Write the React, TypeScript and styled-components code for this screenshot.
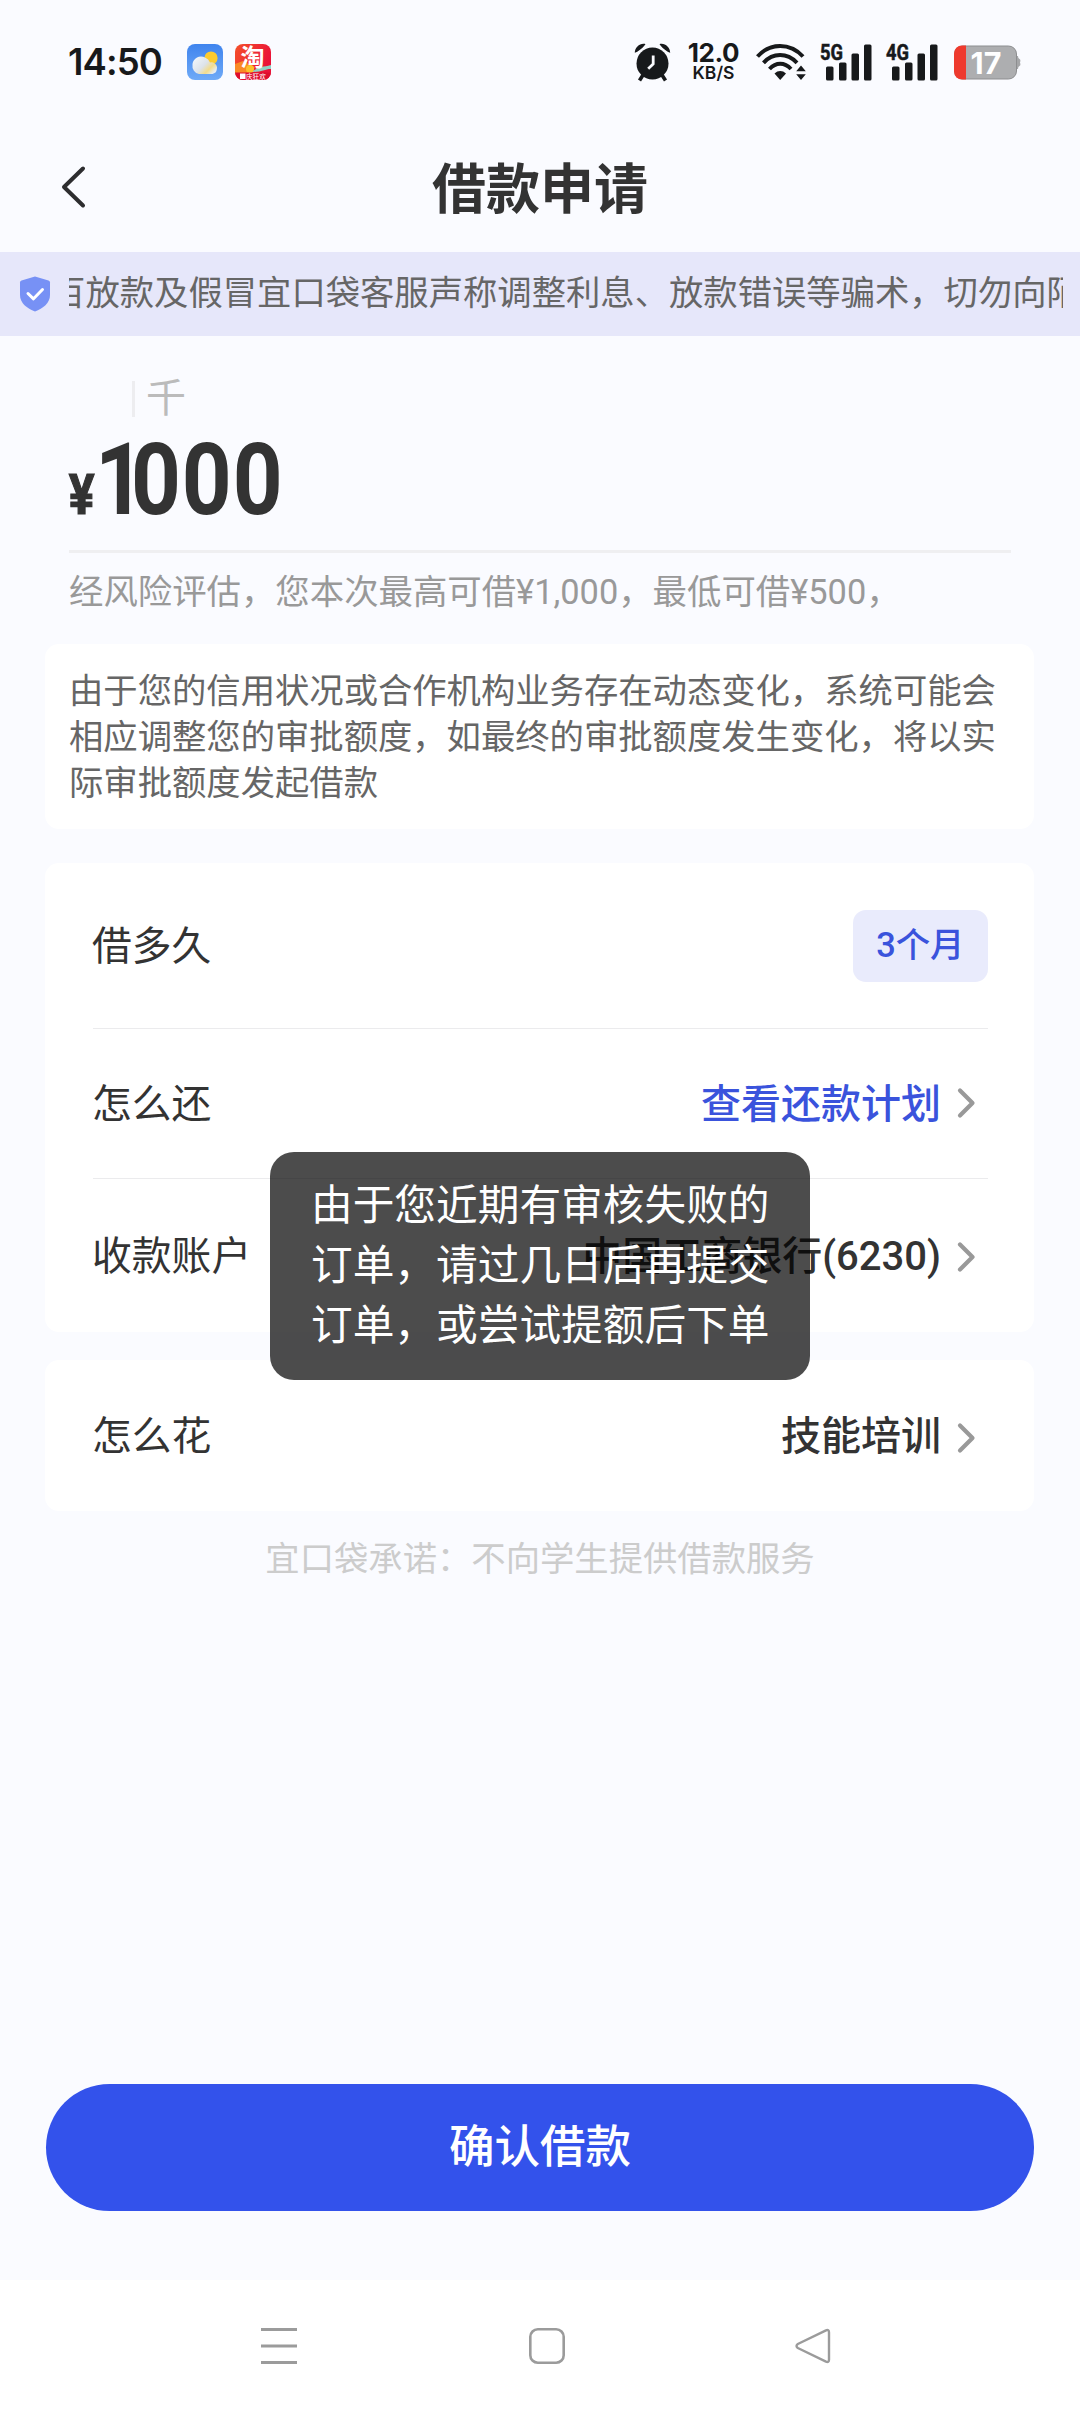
import React from 'react';
import styled, { createGlobalStyle } from 'styled-components';

const GlobalStyle = createGlobalStyle`
  *, *::before, *::after { box-sizing: border-box; }
  body { margin: 0; background: #fafbff; }
`;

const Screen = styled.div`
  position: relative;
  display: flex;
  flex-direction: column;
  width: 1080px;
  height: 2412px;
  overflow: hidden;
  background: #fafbff;
  color: #333;
  font-family: Roboto, 'Noto Sans CJK SC', sans-serif;
  svg { display: block; flex: none; overflow: visible; }
`;

const StatusBar = styled.header`
  display: flex;
  align-items: center;
  height: 124px;
  padding: 0 59px 0 68px;
  color: #17191b;
  font-family: Inter, sans-serif;
`;

const Clock = styled.span`
  width: 119px;
  font-size: 36.5px;
  font-weight: 600;
  line-height: 44px;
  letter-spacing: -0.9px;
  white-space: nowrap;
`;

const AppIcons = styled.div`
  display: flex;
  gap: 12px;
`;

const StatusIcons = styled.div`
  display: flex;
  align-items: center;
  margin-left: auto;
`;

const NetSpeed = styled.div`
  display: flex;
  flex-direction: column;
  align-items: center;
  width: 53px;
  margin: 0 16px 0 15px;
`;

const SpeedValue = styled.span`
  font-size: 26px;
  font-weight: 700;
  line-height: 20px;
  letter-spacing: -0.4px;
`;

const SpeedUnit = styled.span`
  margin-top: 1px;
  font-size: 17.5px;
  font-weight: 600;
  line-height: 17px;
`;

const Signals = styled.div`
  display: flex;
  gap: 14px;
  margin: 0 16px 0 14px;
`;

const TitleBar = styled.div`
  display: grid;
  grid-template-columns: 120px 1fr 120px;
  align-items: center;
  height: 128px;
`;

const BackButton = styled.button`
  display: flex;
  padding: 0 0 2px 60px;
  border: 0;
  background: none;
`;

const Title = styled.h1`
  margin: 0;
  padding-top: 5px;
  font-size: 54px;
  font-weight: 700;
  line-height: 64px;
  text-align: center;
`;

const Notice = styled.div`
  display: flex;
  align-items: center;
  height: 84px;
  padding: 0 17px 0 20px;
  background: #e6e7fa;
`;

const NoticeWindow = styled.div`
  display: flex;
  flex: 1;
  justify-content: center;
  margin-left: 19px;
  height: 46px;
  overflow: hidden;
`;

const NoticeText = styled.span`
  flex: none;
  color: #666;
  font-size: 34.35px;
  line-height: 44px;
  white-space: nowrap;
`;

const AmountSection = styled.section`
  height: 308px;
  padding: 45px 69px 0 68px;
`;

const UnitRow = styled.div`
  display: flex;
  align-items: center;
  height: 36px;
  padding-left: 64px;
  color: #bbb;
  font-size: 40px;
  line-height: 36px;
`;

const UnitTick = styled.i`
  width: 3px;
  height: 36px;
  margin-right: 11px;
  background: #ededf0;
`;

const AmountRow = styled.div`
  display: flex;
  align-items: baseline;
  height: 133px;
  font-weight: 700;
  line-height: 126px;
`;

const Currency = styled.span`
  width: 27px;
  padding-left: 1px;
  font-size: 56px;
  transform: scaleX(0.86);
  transform-origin: left;
  -webkit-text-stroke: 1.2px currentColor;
`;

const Amount = styled.span`
  font-size: 100px;
  letter-spacing: 1.1px;
  transform: scaleX(0.87);
  transform-origin: left;
`;

const LeadDigit = styled.span`
  letter-spacing: -16px;
`;

const AmountRule = styled.div`
  height: 3px;
  margin-left: 1px;
  background: #efeff1;
`;

const Hint = styled.p`
  margin: 16px 0 0 1px;
  color: #999;
  font-size: 34.4px;
  line-height: 46px;
  white-space: nowrap;
`;

const Card = styled.section<{ $top?: number }>`
  margin: ${(p) => p.$top ?? 0}px 46px 0 45px;
  border-radius: 14px;
  background: #fff;
`;

const Explanation = styled(Card)`
  height: 185px;
  padding: 24px;
  color: #666;
  font-size: 34.35px;
  line-height: 46px;
`;

const Row = styled.div<{ $height: number; $last?: boolean }>`
  display: flex;
  align-items: center;
  height: ${(p) => p.$height}px;
  margin: 0 46px 0 48px;
  border-bottom: ${(p) => (p.$last ? 0 : 1)}px solid #ebebed;
  font-size: 40px;
  line-height: 50px;
`;

const Label = styled.span`
  margin-right: auto;
  margin-left: -1px;
  padding-top: 2px;
  font-size: 39.8px;
`;

const Value = styled.span<{ $link?: boolean }>`
  margin-right: 16px;
  padding-top: 2px;
  color: ${(p) => (p.$link ? '#3a53dc' : '#333')};
  font-weight: 500;
  white-space: nowrap;
`;

const Term = styled.span`
  height: 72px;
  padding: 0 23.5px;
  border-radius: 13px;
  background: #e9ebfc;
  color: #3a53dc;
  font-size: 34.4px;
  font-weight: 500;
  line-height: 70px;
`;

const Pledge = styled.p`
  margin: 25px 0 0;
  color: #ccc;
  font-size: 34.35px;
  line-height: 46px;
  text-align: center;
`;

const Confirm = styled.button`
  height: 127px;
  margin: auto 46px 69px;
  padding: 0;
  border: 0;
  border-radius: 64px;
  background: #3352eb;
  color: #fff;
  font-family: inherit;
  font-size: 45.5px;
  font-weight: 500;
  line-height: 60px;
`;

const NavBar = styled.nav`
  display: flex;
  align-items: flex-start;
  gap: 232px;
  height: 132px;
  padding: 48px 0 0 261px;
  background: #fff;
`;

const Toast = styled.div`
  position: absolute;
  top: 1152px;
  left: 270px;
  width: 540px;
  height: 228px;
  padding: 24px 0 0 41px;
  border-radius: 24px;
  background: rgba(0, 0, 0, 0.7);
  color: #fff;
  font-size: 41.7px;
  line-height: 60px;
  white-space: nowrap;
`;

const WeatherIcon = () => (
  <svg width="36" height="36" viewBox="0 0 36 36">
    <defs>
      <linearGradient id="sky" x1="0" y1="0" x2="0" y2="1">
        <stop offset="0" stopColor="#3f84ee" />
        <stop offset="1" stopColor="#6faaf7" />
      </linearGradient>
      <linearGradient id="cloud" x1="0" y1="0" x2="1" y2="0.7">
        <stop offset="0" stopColor="#f6fafd" />
        <stop offset="0.55" stopColor="#dde3ea" />
        <stop offset="0.8" stopColor="#f3dc8a" />
        <stop offset="1" stopColor="#e8ecf0" />
      </linearGradient>
    </defs>
    <rect width="36" height="36" rx="8" fill="url(#sky)" />
    <circle cx="24" cy="14" r="6.6" fill="#fccb2f" />
    <path d="M12 30a7 8.500 0 0 1-6.500-10A8.500 8.500 0 0 1 18 13.500a8 8 0 0 1 5 5 5.500 5.500 0 0 1 7 4.500c0 5-2 7-6 7Z" fill="url(#cloud)" />
  </svg>
);

const ShopIcon = () => (
  <svg width="36" height="36" viewBox="0 0 36 36">
    <defs>
      <linearGradient id="shop" x1="0" y1="0" x2="1" y2="0.4">
        <stop offset="0" stopColor="#f4502a" />
        <stop offset="1" stopColor="#ea1238" />
      </linearGradient>
      <clipPath id="shopClip"><rect width="36" height="36" rx="8" /></clipPath>
    </defs>
    <g clipPath="url(#shopClip)">
      <rect width="36" height="36" fill="url(#shop)" />
      <path d="M0 20 8 17l12 6-4 6H0Z" fill="#f98a25" />
      <circle cx="15" cy="25" r="4" fill="#fcc22c" />
      <path d="M18 27c5-4 10-4 18-6v4c-6 0-10 3-18 3Z" fill="#8fd3c4" />
      <path d="M0 28.500h36v8H0Z" fill="#de0d2e" />
      <text x="5.500" y="21.500" fontSize="24" fontWeight="700" fill="#fff" fontFamily="'Noto Sans CJK SC', sans-serif">淘</text>
      <rect x="5" y="29.500" width="5.500" height="5.500" fill="#fff" />
      <text x="11" y="34.800" fontSize="6.600" fill="#fff" fontFamily="'Noto Sans CJK SC', sans-serif">庆狂欢</text>
    </g>
  </svg>
);

const AlarmIcon = () => (
  <svg width="38" height="38" viewBox="0 0 38 38">
    <path d="M9 32 5.500 37.500M28 32l3.500 5.500" stroke="#17191b" strokeWidth="3.600" />
    <circle cx="18.500" cy="20.500" r="16" fill="#17191b" />
    <path d="M.8 9.800C.8 4 6.500-.6 11.500 1c-1 2.500-7.500 8-10.700 8.800ZM36.200 9.800C36.200 4 30.500-.6 25.500 1c1 2.500 7.500 8 10.700 8.800Z" fill="#17191b" />
    <path d="M19.200 12.500V21l-5 4.800" fill="none" stroke="#fafbff" strokeWidth="2.800" />
  </svg>
);

const WifiIcon = () => (
  <svg width="50" height="38" viewBox="0 0 50 38">
    <g fill="none" stroke="#17191b" strokeWidth="4">
      <path d="M1.500 13.500C14-.5 34-.5 47 13.500" />
      <path d="M7.500 19.800C17 9.500 31 9.500 41 19.800" />
      <path d="M13.500 26C20 19 28.500 19 35 26" />
    </g>
    <path d="M18.500 30.500c3.500-3.300 8-3.300 11.500 0L24.200 37Z" fill="#17191b" />
    <path d="m45 22.500 4.800 5.700h-9.600ZM45 37l4.800-5.700h-9.600Z" fill="#17191b" />
  </svg>
);

const SignalIcon = ({ label }: { label: string }) => (
  <svg width="52" height="37" viewBox="0 0 52 37">
    <text x="0" y="15.500" fontSize="21.500" fontWeight="700" textLength="23" lengthAdjust="spacingAndGlyphs" fill="#17191b" stroke="#17191b" strokeWidth="0.500" fontFamily="Roboto, sans-serif">{label}</text>
    <g fill="#17191b">
      <rect x="6" y="22.500" width="7.500" height="14" rx="1.500" />
      <rect x="19" y="18.500" width="7.500" height="18" rx="1.500" />
      <rect x="31.500" y="9.500" width="7.500" height="27" rx="1.500" />
      <rect x="44" y="0.500" width="7.500" height="36" rx="1.500" />
    </g>
  </svg>
);

const BatteryIcon = ({ level }: { level: number }) => (
  <svg width="67" height="35" viewBox="0 0 67 35">
    <defs><clipPath id="cell"><rect x="0" y="0.500" width="63" height="34" rx="8" /></clipPath></defs>
    <path d="M62 11h2q0 2.500 1.500 3t.5 3.500q1 3-.5 3.500t-1.500 3h-2Z" fill="#a5a6a8" />
    <rect x="0.500" y="1" width="62" height="33" rx="8" fill="#adaeb0" stroke="#8d8e90" />
    <rect x="0" y="0" width="12" height="35" fill="#ee3a2e" clipPath="url(#cell)" />
    <text x="32" y="28.500" textAnchor="middle" fontSize="30.500" fontWeight="700" fill="#fff" fontFamily="Inter, sans-serif">{level}</text>
  </svg>
);

const BackIcon = () => (
  <svg width="28" height="42" viewBox="0 0 28 42">
    <path d="M23 2.500 4 21l19 18.500" fill="none" stroke="#2d2d2f" strokeWidth="4" strokeLinecap="round" strokeLinejoin="round" />
  </svg>
);

const ShieldIcon = () => (
  <svg width="30" height="36" viewBox="0 0 30 36">
    <path d="M15 .5 28.500 4.500Q30 5 30 6.500V19c0 8-7 13.500-15 16.500C7 32.500 0 27 0 19V6.500Q0 5 1.500 4.500Z" fill="#7791f5" />
    <path d="m8 17.500 5.500 5.300 9-9.300" fill="none" stroke="#fff" strokeWidth="3" strokeLinecap="round" strokeLinejoin="round" />
  </svg>
);

const Chevron = styled.svg<{ $shift?: number }>`
  width: 31px;
  height: 32px;
  margin-top: ${(p) => p.$shift ?? 0}px;
`;

const ChevronIcon = ({ shift }: { shift?: number }) => (
  <Chevron viewBox="0 0 31 32" $shift={shift}>
    <path d="m3 3.500 12.500 12.500L3 28.500" fill="none" stroke="#999" strokeWidth="4.200" strokeLinecap="round" strokeLinejoin="round" />
  </Chevron>
);

const MenuKey = () => (
  <svg width="36" height="36" viewBox="0 0 36 36">
    <path d="M0 1.500h36M0 18h36M0 34.500h36" stroke="#9b9b9b" strokeWidth="3" />
  </svg>
);

const HomeKey = () => (
  <svg width="36" height="36" viewBox="0 0 36 36">
    <rect x="1.300" y="1.300" width="33.400" height="33.400" rx="7.500" fill="none" stroke="#9b9b9b" strokeWidth="2.600" />
  </svg>
);

const BackKey = () => (
  <svg width="36" height="36" viewBox="0 0 36 36">
    <path d="M29 2.300 0.800 16q-2.600 2 0 4L29 33.700q3 1 3-2V4.300q0-3-3-2Z" fill="none" stroke="#9b9b9b" strokeWidth="2.400" strokeLinejoin="round" />
  </svg>
);

export default function App() {
  return (
    <Screen>
      <GlobalStyle />
      <StatusBar>
        <Clock>14:50</Clock>
        <AppIcons>
          <WeatherIcon />
          <ShopIcon />
        </AppIcons>
        <StatusIcons>
          <AlarmIcon />
          <NetSpeed>
            <SpeedValue>12.0</SpeedValue>
            <SpeedUnit>KB/S</SpeedUnit>
          </NetSpeed>
          <WifiIcon />
          <Signals>
            <SignalIcon label="5G" />
            <SignalIcon label="4G" />
          </Signals>
          <BatteryIcon level={17} />
        </StatusIcons>
      </StatusBar>

      <TitleBar>
        <BackButton aria-label="返回"><BackIcon /></BackButton>
        <Title>借款申请</Title>
      </TitleBar>

      <Notice>
        <ShieldIcon />
        <NoticeWindow>
          <NoticeText>百放款及假冒宜口袋客服声称调整利息、放款错误等骗术，切勿向陌</NoticeText>
        </NoticeWindow>
      </Notice>

      <AmountSection>
        <UnitRow><UnitTick />千</UnitRow>
        <AmountRow>
          <Currency>¥</Currency>
          <Amount><LeadDigit>1</LeadDigit>000</Amount>
        </AmountRow>
        <AmountRule />
        <Hint>经风险评估，您本次最高可借¥1,000，最低可借¥500，</Hint>
      </AmountSection>

      <Explanation>
        由于您的信用状况或合作机构业务存在动态变化，系统可能会相应调整您的审批额度，如最终的审批额度发生变化，将以实际审批额度发起借款
      </Explanation>

      <Card $top={34}>
        <Row $height={166}>
          <Label>借多久</Label>
          <Term>3个月</Term>
        </Row>
        <Row $height={150}>
          <Label>怎么还</Label>
          <Value $link>查看还款计划</Value>
          <ChevronIcon shift={-2} />
        </Row>
        <Row $height={153} $last>
          <Label>收款账户</Label>
          <Value>中国工商银行(6230)</Value>
          <ChevronIcon shift={3} />
        </Row>
      </Card>

      <Card $top={28}>
        <Row $height={151} $last>
          <Label>怎么花</Label>
          <Value>技能培训</Value>
          <ChevronIcon shift={5} />
        </Row>
      </Card>

      <Pledge>宜口袋承诺：不向学生提供借款服务</Pledge>

      <Confirm>确认借款</Confirm>

      <NavBar>
        <MenuKey />
        <HomeKey />
        <BackKey />
      </NavBar>

      <Toast>
        由于您近期有审核失败的<br />
        订单，请过几日后再提交<br />
        订单，或尝试提额后下单
      </Toast>
    </Screen>
  );
}
